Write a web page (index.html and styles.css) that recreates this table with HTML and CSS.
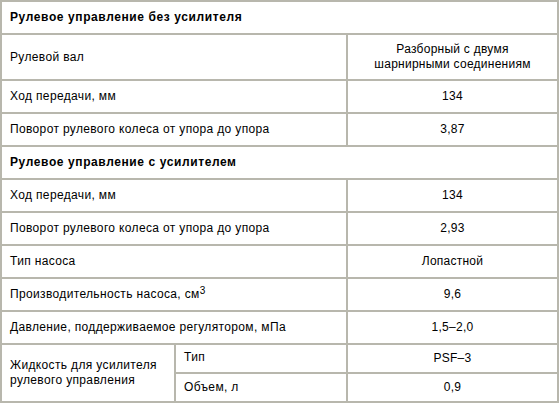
FILE: index.html
```html
<!DOCTYPE html>
<html lang="ru">
<head>
<meta charset="utf-8">
<title>Рулевое управление</title>
<link rel="stylesheet" href="styles.css">
</head>
<body>
<table class="spec">
  <colgroup>
    <col class="c1">
    <col class="c2">
    <col class="c3">
  </colgroup>
  <tr class="head"><td colspan="3">Рулевое управление без усилителя</td></tr>
  <tr class="tall"><td colspan="2">Рулевой вал</td><td class="val">Разборный с двумя<br>шарнирными соединениям</td></tr>
  <tr><td colspan="2">Ход передачи, мм</td><td class="val">134</td></tr>
  <tr><td colspan="2">Поворот рулевого колеса от упора до упора</td><td class="val">3,87</td></tr>
  <tr class="head"><td colspan="3">Рулевое управление с усилителем</td></tr>
  <tr><td colspan="2">Ход передачи, мм</td><td class="val">134</td></tr>
  <tr><td colspan="2">Поворот рулевого колеса от упора до упора</td><td class="val">2,93</td></tr>
  <tr><td colspan="2">Тип насоса</td><td class="val">Лопастной</td></tr>
  <tr><td colspan="2">Производительность насоса, см<sup>3</sup></td><td class="val">9,6</td></tr>
  <tr><td colspan="2">Давление, поддерживаемое регулятором, мПа</td><td class="val">1,5–2,0</td></tr>
  <tr class="sub"><td rowspan="2" class="fluid">Жидкость для усилителя<br>рулевого управления</td><td class="top">Тип</td><td class="val">PSF–3</td></tr>
  <tr class="sub"><td>Объем, л</td><td class="val">0,9</td></tr>
</table>
</body>
</html>
```
FILE: styles.css
```css
html, body {
  margin: 0;
  padding: 0;
  background: #ffffff;
}
body {
  font-family: "Liberation Sans", Arial, sans-serif;
  font-size: 12px;
  color: #000000;
}
.spec {
  border-collapse: collapse;
  width: 557px;
  table-layout: fixed;
  margin-top: 0;
}
.spec .c1 { width: 174px; }
.spec .c2 { width: 172px; }
.spec .c3 { width: 211px; }
.spec td {
  border: 2px solid #b8b7ad;
  padding: 8px 8px;
  line-height: 15px;
  vertical-align: middle;
  text-align: left;
  letter-spacing: 0.35px;
}
.spec td.val {
  text-align: center;
  letter-spacing: 0.25px;
}
.spec tr.head td {
  font-weight: bold;
  letter-spacing: 0.6px;
}
.spec tr.tall td {
  padding: 7px 8px;
}
.spec tr.sub td {
  padding: 6px 8px;
}
.spec tr.sub td.top {
  padding: 5px 8px 7px;
}
.spec td.fluid {
  padding: 6px 8px;
}
.spec sup {
  font-size: 10px;
  line-height: 0;
  vertical-align: 4px;
  letter-spacing: 0;
}
```
